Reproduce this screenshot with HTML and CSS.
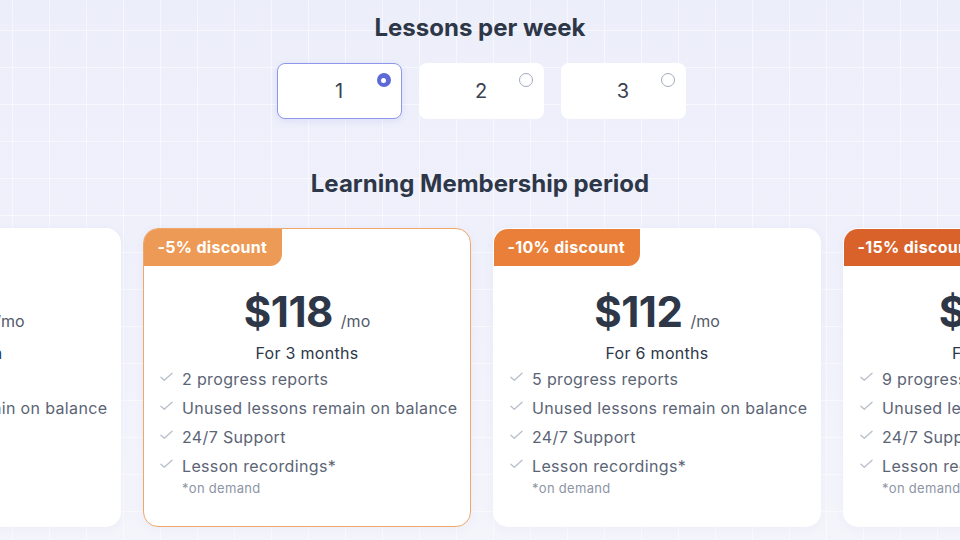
FILE: index.html
```html
<!DOCTYPE html>
<html lang="en">
<head>
<meta charset="utf-8">
<title>Pricing</title>
<link rel="stylesheet" href="styles.css">
</head>
<body>
<main class="page">
  <h2 class="title title-top">Lessons per week</h2>
  <div class="options">
    <div class="option selected"><span class="num">1</span><span class="radio on"></span></div>
    <div class="option"><span class="num">2</span><span class="radio"></span></div>
    <div class="option"><span class="num">3</span><span class="radio"></span></div>
  </div>
  <h2 class="title title-period">Learning Membership period</h2>
  <div class="cards">
    <section class="card">
      <div class="badge-space"></div>
      <div class="price"><span class="amount">$124</span><span class="per">/mo</span></div>
      <div class="period">For 1 month</div>
      <ul class="features">
        <li><svg class="check" viewBox="0 0 14 10"><path d="M1 5.2 4.6 8.6 13 1"/></svg>1 progress report</li>
        <li><svg class="check" viewBox="0 0 14 10"><path d="M1 5.2 4.6 8.6 13 1"/></svg>Unused lessons remain on balance</li>
        <li><svg class="check" viewBox="0 0 14 10"><path d="M1 5.2 4.6 8.6 13 1"/></svg>24/7 Support</li>
        <li><svg class="check" viewBox="0 0 14 10"><path d="M1 5.2 4.6 8.6 13 1"/></svg>Lesson recordings*</li>
      </ul>
      <div class="note">*on demand</div>
    </section>
    <section class="card active">
      <div class="badge b5">-5% discount</div>
      <div class="price"><span class="amount">$118</span><span class="per">/mo</span></div>
      <div class="period">For 3 months</div>
      <ul class="features">
        <li><svg class="check" viewBox="0 0 14 10"><path d="M1 5.2 4.6 8.6 13 1"/></svg>2 progress reports</li>
        <li><svg class="check" viewBox="0 0 14 10"><path d="M1 5.2 4.6 8.6 13 1"/></svg>Unused lessons remain on balance</li>
        <li><svg class="check" viewBox="0 0 14 10"><path d="M1 5.2 4.6 8.6 13 1"/></svg>24/7 Support</li>
        <li><svg class="check" viewBox="0 0 14 10"><path d="M1 5.2 4.6 8.6 13 1"/></svg>Lesson recordings*</li>
      </ul>
      <div class="note">*on demand</div>
    </section>
    <section class="card">
      <div class="badge b10">-10% discount</div>
      <div class="price"><span class="amount">$112</span><span class="per">/mo</span></div>
      <div class="period">For 6 months</div>
      <ul class="features">
        <li><svg class="check" viewBox="0 0 14 10"><path d="M1 5.2 4.6 8.6 13 1"/></svg>5 progress reports</li>
        <li><svg class="check" viewBox="0 0 14 10"><path d="M1 5.2 4.6 8.6 13 1"/></svg>Unused lessons remain on balance</li>
        <li><svg class="check" viewBox="0 0 14 10"><path d="M1 5.2 4.6 8.6 13 1"/></svg>24/7 Support</li>
        <li><svg class="check" viewBox="0 0 14 10"><path d="M1 5.2 4.6 8.6 13 1"/></svg>Lesson recordings*</li>
      </ul>
      <div class="note">*on demand</div>
    </section>
    <section class="card">
      <div class="badge b15">-15% discount</div>
      <div class="price"><span class="amount">$106</span><span class="per">/mo</span></div>
      <div class="period">For 12 months</div>
      <ul class="features">
        <li><svg class="check" viewBox="0 0 14 10"><path d="M1 5.2 4.6 8.6 13 1"/></svg>9 progress reports</li>
        <li><svg class="check" viewBox="0 0 14 10"><path d="M1 5.2 4.6 8.6 13 1"/></svg>Unused lessons remain on balance</li>
        <li><svg class="check" viewBox="0 0 14 10"><path d="M1 5.2 4.6 8.6 13 1"/></svg>24/7 Support</li>
        <li><svg class="check" viewBox="0 0 14 10"><path d="M1 5.2 4.6 8.6 13 1"/></svg>Lesson recordings*</li>
      </ul>
      <div class="note">*on demand</div>
    </section>
  </div>
</main>
</body>
</html>
```
FILE: styles.css
```css
* { box-sizing: border-box; }
html, body { margin: 0; padding: 0; }
body {
  width: 960px;
  height: 540px;
  overflow: hidden;
  font-family: Inter, "Noto Sans", sans-serif;
  color: #2d3748;
  background-color: #eef0fa;
  background-image:
    linear-gradient(to right, rgba(255,255,255,0.55) 1px, transparent 1px),
    linear-gradient(to bottom, rgba(255,255,255,0.55) 1px, transparent 1px),
    linear-gradient(to bottom, #eceefa 0%, #f0f1fb 60%, #f4f5fb 100%);
  background-size: 37px 37px, 37px 37px, 100% 100%;
  background-position: 12px 30px, 12px 30px, 0 0;
}
.page {
  display: flex;
  flex-direction: column;
  align-items: center;
}
.title {
  margin: 0;
  font-size: 24px;
  line-height: 30px;
  font-weight: 700;
  letter-spacing: 0;
  color: #2d3748;
}
.title-top { margin-top: 13px; }
.title-period { margin-top: 50px; }
.options {
  display: flex;
  gap: 17px;
  margin-top: 20px;
  margin-left: 2px;
}
.option {
  position: relative;
  width: 125px;
  height: 56px;
  background: #fff;
  border-radius: 8px;
  border: 1.5px solid transparent;
  display: flex;
  align-items: center;
  justify-content: center;
}
.option.selected {
  border-color: #8f97ea;
  box-shadow: 0 2px 6px rgba(90,103,216,0.12);
}
.num {
  font-size: 20px;
  font-weight: 400;
  color: #3a4252;
}
.radio {
  position: absolute;
  top: 9px;
  right: 10px;
  width: 14px;
  height: 14px;
  border-radius: 50%;
  border: 1.5px solid #a3aabb;
  background: #fff;
}
.radio.on {
  border: none;
  background: #5d69d6;
  display: flex;
  align-items: center;
  justify-content: center;
}
.radio.on::after {
  content: "";
  width: 5px;
  height: 5px;
  border-radius: 50%;
  background: #fff;
}
.cards {
  align-self: flex-start;
  display: flex;
  gap: 22px;
  margin-top: 29px;
  margin-left: -207px;
}
.card {
  flex: 0 0 328px;
  width: 328px;
  height: 299px;
  background: #fff;
  border-radius: 15px;
  border: 1.5px solid transparent;
  overflow: hidden;
  display: flex;
  flex-direction: column;
  box-shadow: 0 2px 10px rgba(100,110,170,0.06);
}
.card.active { border-color: #f0a86a; }
.badge-space { height: 38px; }
.badge {
  align-self: flex-start;
  height: 38px;
  margin: -1.5px 0 0 -1.5px;
  padding: 0 15px;
  display: flex;
  align-items: center;
  color: #fff;
  font-size: 16px;
  font-weight: 700;
  letter-spacing: 0.3px;
  border-radius: 0 0 12px 0;
}
.b5 { background: #ec9a56; }
.b10 { background: #e97f38; }
.b15 { background: #d9622b; }
.card .badge + .price { margin-top: 22.5px; }
.card .badge-space + .price { margin-top: 21px; }
.price {
  display: flex;
  justify-content: center;
  align-items: baseline;
  gap: 8px;
  line-height: 48px;
  height: 48px;
}
.amount {
  font-size: 42px;
  font-weight: 700;
  letter-spacing: -0.5px;
  color: #2d3748;
}
.per {
  font-size: 16px;
  color: #525a6a;
}
.period {
  margin-top: 6px;
  text-align: center;
  font-size: 16px;
  line-height: 22px;
  letter-spacing: 0.3px;
  color: #2d3748;
}
.features {
  list-style: none;
  margin: 0;
  padding: 0 0 0 16px;
}
.features li {
  display: flex;
  align-items: center;
  height: 29px;
  font-size: 16px;
  letter-spacing: 0.35px;
  color: #5b6475;
}
.check {
  width: 13px;
  height: 10px;
  margin-right: 9px;
  margin-top: -4px;
  fill: none;
  stroke: #b8bfcb;
  stroke-width: 1.4;
  stroke-linecap: round;
  stroke-linejoin: round;
}
.note {
  padding-left: 38px;
  font-size: 13px;
  line-height: 16px;
  letter-spacing: 0.3px;
  color: #8d95a5;
}
```
